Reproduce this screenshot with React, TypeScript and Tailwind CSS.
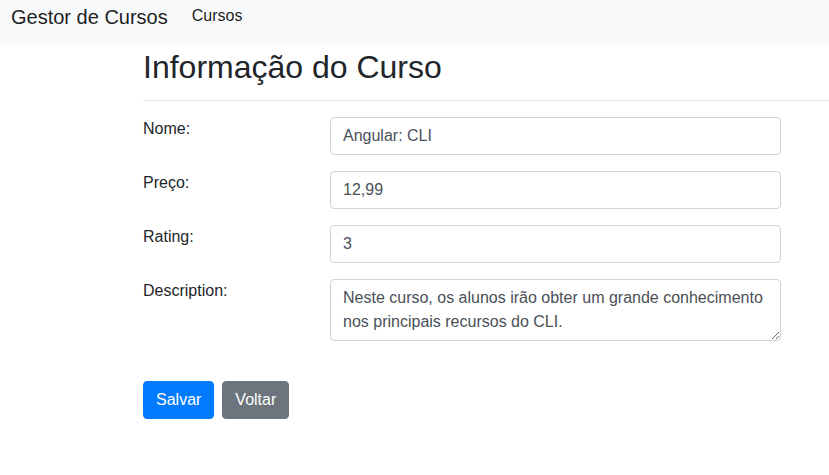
const fields = [
  { label: "Nome:", value: "Angular: CLI" },
  { label: "Preço:", value: "12,99" },
  { label: "Rating:", value: "3" },
];

export default function App() {
  return (
    <div className="min-h-[475px] bg-white text-[#212529] font-['Liberation_Sans',Arial,sans-serif] overflow-hidden">
      <nav className="h-[45px] bg-[#f8f9fa] flex items-start px-[11px]">
        <span className="mt-[2px] text-[20px] leading-[30px] text-black/90">Gestor de Cursos</span>
        <span className="ml-[24px] mt-[4px] text-[16px] leading-[24px] text-black/90">Cursos</span>
      </nav>

      <div className="ml-[143px]">
        <h2 className="text-[32px] leading-[38px] mt-[3px] mb-[8px]">Informação do Curso</h2>
        <hr className="border-0 border-t border-black/10 mt-[14px] mb-[16px]" />

        <form className="w-[638px]">
          {fields.map((f) => (
            <div key={f.label} className="flex mb-[16px]">
              <label className="w-[187px] text-[16px] leading-[24px]">{f.label}</label>
              <input
                readOnly
                value={f.value}
                className="w-[451px] h-[38px] px-[12px] py-[6px] text-[16px] leading-[24px] text-[#495057] border border-[#ced4da] rounded-[4px] bg-white outline-none"
              />
            </div>
          ))}
          <div className="flex mb-[16px]">
            <label className="w-[187px] text-[16px] leading-[24px]">Description:</label>
            <textarea
              readOnly
              rows={2}
              value="Neste curso, os alunos irão obter um grande conhecimento nos principais recursos do CLI."
              className="w-[451px] h-[62px] px-[12px] py-[6px] text-[16px] leading-[24px] text-[#495057] border border-[#ced4da] rounded-[4px] bg-white outline-none resize-y"
            />
          </div>

          <div className="flex gap-[8px] pt-[24px]">
            <button type="button" className="h-[38px] px-[12px] text-[16px] leading-[24px] text-white bg-[#007bff] border border-[#007bff] rounded-[4px]">
              Salvar
            </button>
            <button type="button" className="h-[38px] px-[12px] text-[16px] leading-[24px] text-white bg-[#6c757d] border border-[#6c757d] rounded-[4px]">
              Voltar
            </button>
          </div>
        </form>
      </div>
    </div>
  );
}
